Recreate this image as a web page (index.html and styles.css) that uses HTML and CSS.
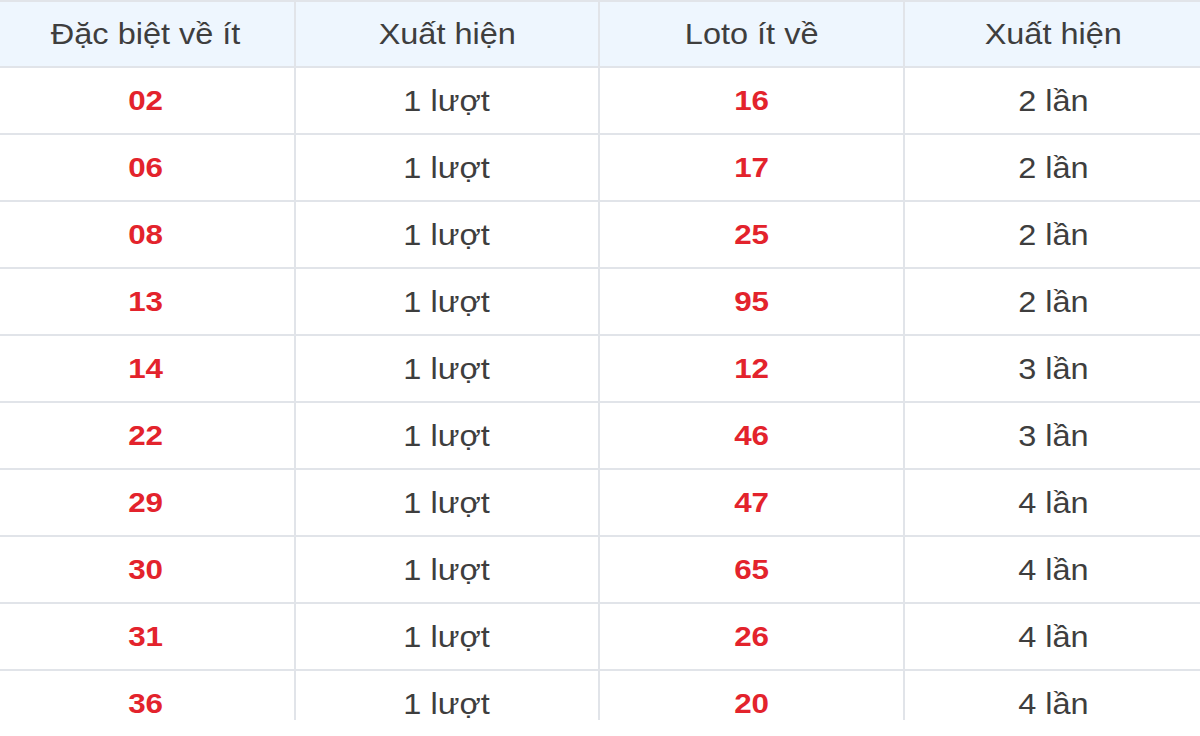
FILE: index.html
```html
<!DOCTYPE html>
<html lang="vi">
<head>
<meta charset="utf-8">
<link rel="stylesheet" href="styles.css">
</head>
<body>
<div class="frame">
  <table class="stats">
    <colgroup>
      <col class="c1"><col class="c2"><col class="c3"><col class="c4">
    </colgroup>
    <thead>
      <tr><th><span class="t">Đặc biệt về ít</span></th><th><span class="t">Xuất hiện</span></th><th><span class="t">Loto ít về</span></th><th><span class="t">Xuất hiện</span></th></tr>
    </thead>
    <tbody>
      <tr><td class="num"><span class="t">02</span></td><td><span class="t">1 lượt</span></td><td class="num"><span class="t">16</span></td><td><span class="t">2 lần</span></td></tr>
      <tr><td class="num"><span class="t">06</span></td><td><span class="t">1 lượt</span></td><td class="num"><span class="t">17</span></td><td><span class="t">2 lần</span></td></tr>
      <tr><td class="num"><span class="t">08</span></td><td><span class="t">1 lượt</span></td><td class="num"><span class="t">25</span></td><td><span class="t">2 lần</span></td></tr>
      <tr><td class="num"><span class="t">13</span></td><td><span class="t">1 lượt</span></td><td class="num"><span class="t">95</span></td><td><span class="t">2 lần</span></td></tr>
      <tr><td class="num"><span class="t">14</span></td><td><span class="t">1 lượt</span></td><td class="num"><span class="t">12</span></td><td><span class="t">3 lần</span></td></tr>
      <tr><td class="num"><span class="t">22</span></td><td><span class="t">1 lượt</span></td><td class="num"><span class="t">46</span></td><td><span class="t">3 lần</span></td></tr>
      <tr><td class="num"><span class="t">29</span></td><td><span class="t">1 lượt</span></td><td class="num"><span class="t">47</span></td><td><span class="t">4 lần</span></td></tr>
      <tr><td class="num"><span class="t">30</span></td><td><span class="t">1 lượt</span></td><td class="num"><span class="t">65</span></td><td><span class="t">4 lần</span></td></tr>
      <tr><td class="num"><span class="t">31</span></td><td><span class="t">1 lượt</span></td><td class="num"><span class="t">26</span></td><td><span class="t">4 lần</span></td></tr>
      <tr><td class="num"><span class="t">36</span></td><td><span class="t">1 lượt</span></td><td class="num"><span class="t">20</span></td><td><span class="t">4 lần</span></td></tr>
    </tbody>
  </table>
</div>
</body>
</html>
```
FILE: styles.css
```css
html, body {
  margin: 0;
  padding: 0;
  background: #ffffff;
}
body {
  font-family: "Liberation Sans", Arial, sans-serif;
  overflow: hidden;
}
.frame {
  height: 720px;
  overflow: hidden;
  margin-left: -4px;
  width: 1206px;
}
.stats {
  border-collapse: collapse;
  table-layout: fixed;
  width: 1206px;
}
.c1 { width: 298px; }
.c2 { width: 304px; }
.c3 { width: 305px; }
.c4 { width: 299px; }
.stats th,
.stats td {
  border: 2px solid #e1e4e9;
  height: 65px;
  padding: 0;
  text-align: center;
  vertical-align: middle;
  font-size: 29px;
  line-height: 34px;
  color: #3e3e3e;
}
.stats th {
  background: #eef6fe;
  font-weight: normal;
  height: 64px;
}
.stats td.num {
  color: #e3232c;
  font-weight: bold;
  font-size: 28px;
}
.t {
  display: inline-block;
  transform: scaleX(1.12);
}
```
